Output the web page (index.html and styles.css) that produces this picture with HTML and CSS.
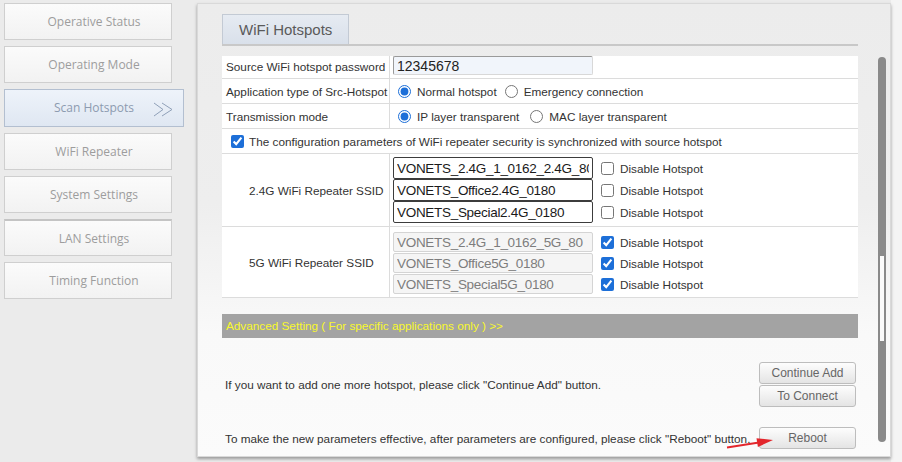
FILE: index.html
```html
<!DOCTYPE html>
<html lang="en">
<head>
    <meta charset="UTF-8">
    <meta name="viewport" content="width=device-width, initial-scale=1.0">
    <title>WiFi Hotspots</title>
    <link rel="stylesheet" href="styles.css">
</head>
<body>
    <div class="page">
        <nav class="sidebar">
            <div class="nav-item">Operative Status</div>
            <div class="nav-item">Operating Mode</div>
            <div class="nav-item active">Scan Hotspots
                <svg class="nav-arrow" width="21" height="15" viewBox="0 0 21 15">
                    <polyline points="1,1 10,7.5 1,14" />
                    <polyline points="9,1 19,7.5 9,14" />
                </svg>
            </div>
            <div class="nav-item">WiFi Repeater</div>
            <div class="nav-item">System Settings</div>
            <div class="nav-item lan">LAN Settings</div>
            <div class="nav-item">Timing Function</div>
        </nav>

        <main class="panel">
            <div class="content">
                <div class="tab">WiFi Hotspots</div>
                <div class="tab-line"></div>

                <div class="table-view">
                    <div class="settings">
                        <div class="row">
                            <div class="label">Source WiFi hotspot password</div>
                            <div class="value"><input class="pwd" type="text" value="12345678"></div>
                        </div>
                        <div class="row">
                            <div class="label">Application type of Src-Hotspot</div>
                            <div class="value">
                                <label class="opt first"><input type="radio" name="apptype" checked>Normal hotspot</label>
                                <label class="opt"><input type="radio" name="apptype">Emergency connection</label>
                            </div>
                        </div>
                        <div class="row">
                            <div class="label">Transmission mode</div>
                            <div class="value">
                                <label class="opt first wide"><input type="radio" name="mode" checked>IP layer transparent</label>
                                <label class="opt"><input type="radio" name="mode">MAC layer transparent</label>
                            </div>
                        </div>
                        <div class="row full">
                            <label class="sync"><input type="checkbox" checked>The configuration parameters of WiFi repeater security is synchronized with source hotspot</label>
                        </div>
                        <div class="row group g24">
                            <div class="label ssid-label">2.4G WiFi Repeater SSID</div>
                            <div class="value ssid-list">
                                <div class="ssid"><input type="text" value="VONETS_2.4G_1_0162_2.4G_80"><label><input type="checkbox">Disable Hotspot</label></div>
                                <div class="ssid"><input type="text" value="VONETS_Office2.4G_0180"><label><input type="checkbox">Disable Hotspot</label></div>
                                <div class="ssid"><input type="text" value="VONETS_Special2.4G_0180"><label><input type="checkbox">Disable Hotspot</label></div>
                            </div>
                        </div>
                        <div class="row group g5">
                            <div class="label ssid-label">5G WiFi Repeater SSID</div>
                            <div class="value ssid-list">
                                <div class="ssid"><input type="text" value="VONETS_2.4G_1_0162_5G_80" disabled><label><input type="checkbox" checked>Disable Hotspot</label></div>
                                <div class="ssid"><input type="text" value="VONETS_Office5G_0180" disabled><label><input type="checkbox" checked>Disable Hotspot</label></div>
                                <div class="ssid"><input type="text" value="VONETS_Special5G_0180" disabled><label><input type="checkbox" checked>Disable Hotspot</label></div>
                            </div>
                        </div>
                    </div>
                </div>

                <div class="advanced">Advanced Setting ( For specific applications only ) &gt;&gt;</div>

                <div class="action-row first-action">
                    <span>If you want to add one more hotspot, please click "Continue Add" button.</span>
                    <div class="btn-stack">
                        <button class="btn">Continue Add</button>
                        <button class="btn">To Connect</button>
                    </div>
                </div>
                <div class="action-row">
                    <span>To make the new parameters effective, after parameters are configured, please click "Reboot" button.</span>
                    <div class="btn-stack">
                        <button class="btn">Reboot</button>
                    </div>
                </div>
            </div>
            <div class="scrollbar"><div class="thumb"></div></div>
        </main>

        <svg class="pointer" width="60" height="22" viewBox="0 0 60 22">
            <line x1="7" y1="17.5" x2="39" y2="12.5" />
            <polygon points="53,10 37.9,17 36.5,8.2" />
        </svg>
    </div>
</body>
</html>
```

FILE: styles.css
```css
body {
  margin: 0;
  padding: 0;
  background-color: #ececec;
  font-family: "Liberation Sans", Arial, sans-serif;
  font-size: 11.75px;
  color: #333;
}

.page {
  position: relative;
  display: flex;
  width: 902px;
  height: 462px;
  overflow: hidden;
  background: linear-gradient(to right, #ebebeb 0, #ebebeb 891px, #f4f4f4 891px);
}

/* left menu */
.sidebar {
  width: 193px;
  padding: 3px 0 0 4px;
  display: flex;
  flex-direction: column;
  gap: 6px;
}

.nav-item {
  position: relative;
  box-sizing: border-box;
  width: 168px;
  height: 37px;
  padding-left: 12px;
  border: 1px solid #cfcfcf;
  background: linear-gradient(#fbfbfb, #f2f2f2);
  font-family: "Open Sans", "Noto Sans", sans-serif;
  font-size: 12px;
  color: #9d9d9d;
  text-align: center;
  line-height: 35px;
}

.nav-item.lan {
  border-top: 2px solid #c4c4c4;
}

.nav-item.active {
  width: 180px;
  padding-right: 12px;
  height: 38px;
  line-height: 36px;
  border-color: #b3bfd0;
  background: linear-gradient(#eef3fa, #dfe7f2);
  color: #8d9bb0;
}

.nav-arrow {
  position: absolute;
  left: 148px;
  top: 12px;
  fill: none;
  stroke: #8fa0b8;
  stroke-width: 1;
}

/* main panel */
.panel {
  display: flex;
  box-sizing: border-box;
  width: 694px;
  height: 454px;
  margin-top: 3px;
  border: 1px solid #d9d9d9;
  background: linear-gradient(#ececec 0, #eeeeee 200px, #f9f9f9 330px, #fbfbfb 100%);
  box-shadow: 0 2px 3px rgba(0, 0, 0, 0.35);
}

.content {
  width: 636px;
  margin-left: 24px;
}

.tab {
  display: inline-block;
  box-sizing: border-box;
  height: 30px;
  margin-top: 10px;
  padding: 0 16px;
  border: 1px solid #c3cad4;
  border-bottom: none;
  background: linear-gradient(#e6ebf2, #d9e0ea);
  font-size: 15px;
  color: #5a5a5a;
  line-height: 29px;
  vertical-align: top;
}

.tab-line {
  height: 2px;
  background-color: #c8c8c8;
}

.table-view {
  margin-top: 10px;
  overflow: hidden;
}

.settings {
  margin-top: -2px;
  background-color: #fff;
}

.row {
  display: flex;
  height: 24px;
  border-bottom: 1px solid #dcdcdc;
}

.label {
  box-sizing: border-box;
  width: 168px;
  padding-left: 4px;
  border-right: 1px solid #dcdcdc;
  display: flex;
  align-items: center;
  white-space: nowrap;
}

.value {
  flex: 1;
  display: flex;
  align-items: center;
}

.pwd {
  align-self: flex-start;
  box-sizing: border-box;
  width: 200px;
  height: 19px;
  margin: 2px 0 0 3px;
  padding: 0 3px;
  border: 1px solid #9a9a9a;
  border-right-color: #d8d8d8;
  border-bottom-color: #d8d8d8;
  border-radius: 2px;
  background-color: #f1f5fb;
  font-family: "Liberation Sans", Arial, sans-serif;
  font-size: 14px;
  color: #222;
}

.opt {
  display: inline-flex;
  align-items: center;
  margin-right: 8px;
}

.opt.first {
  margin-left: 8px;
}

.opt.wide {
  margin-right: 11px;
}

input[type="radio"],
input[type="checkbox"] {
  width: 13px;
  height: 13px;
  margin: 0 6px 0 0;
  accent-color: #1d6fd8;
}

.row.full {
  align-items: center;
}

.sync {
  display: flex;
  align-items: center;
  margin-left: 9px;
}

.sync input {
  margin-right: 5px;
}

.row.g24 {
  height: 72px;
}

.row.g5 {
  height: 70px;
}

.ssid-label {
  padding-left: 27px;
}

.ssid-list {
  flex-direction: column;
  align-items: flex-start;
  justify-content: center;
  padding-left: 3px;
}

.g5 .ssid-list {
  gap: 1px;
  padding-top: 2px;
}

.ssid {
  display: flex;
  align-items: center;
}

.ssid input[type="text"] {
  box-sizing: border-box;
  width: 200px;
  height: 22px;
  padding: 0 3px;
  border: 1px solid #3c3c3c;
  border-radius: 2px;
  background-color: #fff;
  font-family: "Liberation Sans", Arial, sans-serif;
  font-size: 13.5px;
  letter-spacing: -0.3px;
  color: #1a1a1a;
}

.ssid input[type="text"]:disabled {
  height: 20px;
  border-color: #d4d4d4;
  background-color: #f5f5f5;
  color: #7d7d7d;
}

.ssid label {
  display: flex;
  align-items: center;
  margin-left: 8px;
}

.advanced {
  height: 24px;
  margin-top: 16px;
  padding-left: 4px;
  background-color: #a3a3a3;
  color: #f8f82c;
  line-height: 24px;
}

.action-row {
  display: flex;
  justify-content: space-between;
  align-items: center;
  margin-top: 20px;
  padding-left: 3px;
  white-space: nowrap;
}

.action-row.first-action {
  margin-top: 24px;
}

.btn-stack {
  display: flex;
  flex-direction: column;
  gap: 1px;
  width: 97px;
  margin-right: 2px;
}

.btn {
  height: 22px;
  padding: 0;
  border: 1px solid #bdbdbd;
  border-radius: 3px;
  background: linear-gradient(#fdfdfd, #e4e4e4);
  font-family: "Liberation Sans", Arial, sans-serif;
  font-size: 12px;
  color: #666;
}

.scrollbar {
  position: relative;
  width: 8px;
  height: 385px;
  margin: 53px 0 0 20px;
  border-radius: 4px;
  background-color: #8a8a8a;
}

.thumb {
  position: absolute;
  left: 2px;
  top: 199px;
  width: 4px;
  height: 85px;
  background-color: #fafafa;
}

.pointer {
  position: absolute;
  left: 720px;
  top: 430px;
}

.pointer line {
  stroke: #e3262c;
  stroke-width: 2;
}

.pointer polygon {
  fill: #e3262c;
}
```
